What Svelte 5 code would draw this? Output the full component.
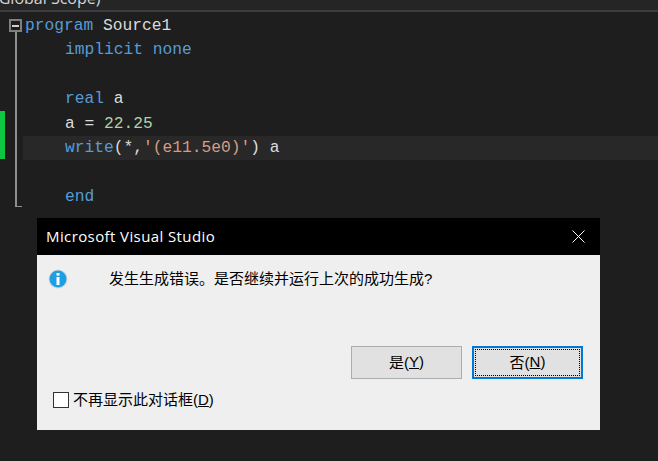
<script>
  const lines = [
    { indent: 0, parts: [['kw', 'program'], ['', ' Source1']] },
    { indent: 1, parts: [['kw', 'implicit none']] },
    { indent: 0, parts: [] },
    { indent: 1, parts: [['kw', 'real'], ['', ' a']] },
    { indent: 1, changed: true, parts: [['', 'a = '], ['num', '22.25']] },
    { indent: 1, changed: true, current: true, parts: [['kw', 'write'], ['', '(*,'], ['str', "'(e11.5e0)'"], ['', ') a']] },
    { indent: 0, parts: [] },
    { indent: 1, parts: [['kw', 'end']] }
  ];
</script>

<div class="window">
  <div class="scope-bar"><span>(Global Scope)</span></div>

  <div class="editor">
    <div class="gutter">
      {#each lines as line}
        <div class="mark" class:changed={line.changed}></div>
      {/each}
    </div>
    <div class="outline">
      <div class="fold"><i></i></div>
      <div class="fold-line"></div>
    </div>
    <div class="code">
      {#each lines as line}
        <div class="line" class:current={line.current} class:indented={line.indent}>
          {#each line.parts as part}<span class={part[0]}>{part[1]}</span>{/each}
        </div>
      {/each}
    </div>
  </div>

  <div class="dialog" role="dialog">
    <div class="title-bar">
      <span class="title">Microsoft Visual Studio</span>
      <svg class="close" width="13" height="13" viewBox="0 0 13 13" aria-label="Close">
        <path d="M0.5 0.5L12.5 12.5M12.5 0.5L0.5 12.5" stroke="#fff" stroke-width="1" fill="none" />
      </svg>
    </div>
    <div class="body">
      <div class="message">
        <svg class="info" width="20" height="20" viewBox="0 0 20 20">
          <circle cx="10" cy="10" r="9.5" fill="#d0d6da" />
          <circle cx="10" cy="10" r="8.5" fill="#1c9fe3" />
          <rect x="8.5" y="4" width="3" height="2.6" fill="#fff" />
          <rect x="8.5" y="8" width="3" height="8" fill="#fff" />
        </svg>
        <span class="text">发生生成错误。是否继续并运行上次的成功生成?</span>
      </div>
      <div class="buttons">
        <button class="btn">是(<u>Y</u>)</button>
        <button class="btn default"><span class="focus">否(<u>N</u>)</span></button>
      </div>
      <label class="dont-show">
        <span class="check"></span>
        <span>不再显示此对话框(<u>D</u>)</span>
      </label>
    </div>
  </div>
</div>

<style>
  :global(body) {
    background: #1e1e1e;
  }

  .window {
    position: relative;
    width: 658px;
    height: 461px;
    overflow: hidden;
    background: #1e1e1e;
  }

  .scope-bar {
    height: 10px;
    background: #252526;
    border-bottom: 2px solid #3c3c3f;
    overflow: hidden;
    color: #d4d4d4;
    font: 16px/16px "Open Sans", sans-serif;
  }

  .scope-bar span {
    display: block;
    margin: -10px 0 0 -6px;
  }

  .editor {
    display: flex;
    padding-top: 1px;
  }

  .gutter {
    width: 5px;
    flex: none;
  }

  .mark {
    height: 24.4px;
  }

  .mark.changed {
    background: #10c53f;
  }

  .outline {
    width: 18px;
    flex: none;
    padding: 6px 0 0 4px;
    box-sizing: border-box;
  }

  .fold {
    width: 13px;
    height: 13px;
    box-sizing: border-box;
    border: 2px solid #7f7f7f;
    display: flex;
    align-items: center;
    justify-content: center;
  }

  .fold i {
    width: 7px;
    height: 2px;
    background: #d0d0d0;
  }

  .fold-line {
    width: 7px;
    height: 175px;
    margin-left: 6px;
    box-sizing: border-box;
    border-left: 2px solid #8f8f8f;
    border-bottom: 1px solid #8f8f8f;
  }

  .code {
    flex: 1;
    padding-top: 1px;
    font: 16.25px/24.4px "Liberation Mono", monospace;
    color: #dcdcdc;
    white-space: pre;
  }

  .line {
    height: 24.4px;
    padding-left: 2px;
  }

  .line.indented {
    padding-left: 42px;
  }

  .line.current {
    background: #282828;
  }

  .kw {
    color: #569cd6;
  }

  .num {
    color: #b5cea8;
  }

  .str {
    color: #d69d85;
  }

  .dialog {
    position: absolute;
    left: 37px;
    top: 218px;
    width: 563px;
    height: 212px;
    background: #efefef;
    display: flex;
    flex-direction: column;
    font-family: "Liberation Sans", "Noto Sans CJK SC", sans-serif;
  }

  .title-bar {
    height: 37px;
    box-sizing: border-box;
    flex: none;
    background: #000;
    color: #fff;
    display: flex;
    align-items: center;
    justify-content: space-between;
    padding: 0 15px 1px 9px;
    font-family: "Open Sans", sans-serif;
    font-size: 15px;
    letter-spacing: 0.4px;
  }

  .body {
    flex: 1;
    display: flex;
    flex-direction: column;
    color: #000;
    font-size: 15px;
  }

  .message {
    display: flex;
    align-items: center;
    gap: 41px;
    padding: 14px 0 0 11px;
    height: 20px;
  }

  .text {
    margin-top: -4px;
  }

  .buttons {
    display: flex;
    justify-content: flex-end;
    gap: 10px;
    padding: 57px 17px 0 0;
  }

  .btn {
    width: 111px;
    height: 33px;
    padding: 0 0 2px;
    border: 1px solid #adadad;
    background: #e1e1e1;
    color: #000;
    font: inherit;
    display: flex;
    align-items: center;
    justify-content: center;
  }

  .btn.default {
    padding: 0;
    border: 2px solid #0078d7;
  }

  .focus {
    align-self: stretch;
    flex: 1;
    margin: 1px;
    padding-bottom: 2px;
    display: flex;
    align-items: center;
    justify-content: center;
    border: 1px dotted #000;
    white-space: pre;
  }

  .dont-show {
    display: flex;
    align-items: center;
    gap: 4px;
    padding: 13px 0 0 16px;
    line-height: 16px;
  }

  .check {
    width: 16px;
    height: 16px;
    box-sizing: border-box;
    border: 1px solid #333;
    background: #fff;
  }
</style>
